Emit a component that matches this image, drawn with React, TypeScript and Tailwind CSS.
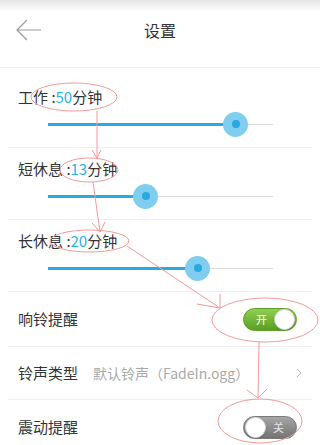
import React from "react";

const FONT = { fontFamily: '"Noto Sans CJK SC", Roboto, "Noto Sans", sans-serif' };

interface SliderProps {
  label: string;
  value: number;
  max: number;
}

function TimeSlider({ label, value, max }: SliderProps) {
  const pct = (value / max) * 100;
  return (
    <div>
      <div className="pl-[10px] text-[15px] leading-[20px] text-[#333]">
        {label} :<span className="text-[#29b3ec]">{value}</span>分钟
      </div>
      <div className="mt-[5px] h-[24px] flex items-center pl-[40px]">
        <div className="relative w-[225px] h-[24px]">
          <div className="absolute left-0 right-0 top-[11.5px] h-px bg-[#dcdcdc]" />
          <div className="absolute left-0 top-[10.5px] h-[3px] bg-[#2aa9e3]" style={{ width: `${pct}%` }} />
          <div
            className="absolute top-0 w-[25px] h-[25px] -ml-[12.5px] -mt-[0.5px] rounded-full bg-[#7fcdef] flex items-center justify-center"
            style={{ left: `${pct}%` }}
          >
            <div className="w-[8px] h-[8px] rounded-full bg-[#27a9e1]" />
          </div>
        </div>
      </div>
    </div>
  );
}

function Toggle({ on }: { on: boolean }) {
  if (on) {
    return (
      <div className="w-[54px] h-[23px] rounded-full bg-gradient-to-b from-[#8fd04e] to-[#5a9f22] border border-[#5f9e2c] flex items-center justify-between pl-[12px] pr-px">
        <span className="text-[11px] text-white leading-none">开</span>
        <div className="w-[21px] h-[21px] rounded-full bg-white border border-[#d8d8d8] shadow-sm" />
      </div>
    );
  }
  return (
    <div className="w-[54px] h-[23px] rounded-full bg-gradient-to-b from-[#a6a6a6] to-[#747474] border border-[#7a7a7a] flex items-center justify-between pl-px pr-[12px]">
      <div className="w-[21px] h-[21px] rounded-full bg-white border border-[#d8d8d8] shadow-sm" />
      <span className="text-[11px] text-[#e6e6e6] leading-none">关</span>
    </div>
  );
}

function Annotations() {
  const c = "#f49a9a";
  return (
    <svg className="absolute inset-0 pointer-events-none" width="320" height="445" viewBox="0 0 320 445" fill="none" stroke={c} strokeWidth="1">
      <ellipse cx="74" cy="97" rx="43" ry="14" />
      <ellipse cx="89" cy="170" rx="29" ry="12" />
      <ellipse cx="89.5" cy="241" rx="39.5" ry="11" />
      <ellipse cx="265" cy="320" rx="53" ry="22" />
      <ellipse cx="260" cy="421" rx="42" ry="22" />
      <path d="M97 111 L97 158 M92 150 L97 158 L101 150" />
      <path d="M93 182 L100 232 M92 223 L100 232 L105 222" />
      <path d="M127 246 L220 308 M197 304 L220 308 L220 294" />
      <path d="M259 342 L258 398 M247 390 L258 398 L267 389" />
    </svg>
  );
}

export default function App() {
  return (
    <div className="relative w-[320px] h-[445px] overflow-hidden bg-white" style={FONT}>
      <div className="h-[68px] bg-[linear-gradient(#e4e4e4,#ffffff_11px)] border-b border-[#f0f0f0]">
        <div className="h-[59px] flex items-center">
          <div className="w-[60px] pl-[16px] flex items-center">
            <svg width="26" height="22" viewBox="0 0 26 22" fill="none" stroke="#9a9a9a" strokeWidth="1.2">
              <path d="M25 11 L1 11 M11 1 L1 11 L11 21" />
            </svg>
          </div>
          <div className="flex-1 text-center text-[16px] text-[#333]">设置</div>
          <div className="w-[60px]" />
        </div>
      </div>

      <div className="mx-2">
        <div className="h-[80px] pt-[19px] border-b border-[#f0f0f0]">
          <TimeSlider label="工作" value={50} max={60} />
        </div>
        <div className="h-[72px] pt-[11px] border-b border-[#f0f0f0]">
          <TimeSlider label="短休息" value={13} max={30} />
        </div>
        <div className="h-[72px] pt-[11px] border-b border-[#f0f0f0]">
          <TimeSlider label="长休息" value={20} max={30} />
        </div>

        <div className="h-[55px] flex items-center justify-between pl-[10px] pr-[15px] border-b border-[#f0f0f0]">
          <span className="text-[15px] text-[#333]">响铃提醒</span>
          <Toggle on />
        </div>
        <div className="h-[53px] flex items-center pl-[10px] pr-[10px] border-b border-[#f0f0f0]">
          <span className="text-[15px] text-[#333]">铃声类型</span>
          <span className="ml-[15px] text-[14px] text-[#aaa]">默认铃声（FadeIn.ogg）</span>
          <svg className="ml-auto" width="6" height="10" viewBox="0 0 6 10" fill="none" stroke="#bbb" strokeWidth="1">
            <path d="M1 1 L5 5 L1 9" />
          </svg>
        </div>
        <div className="h-[55px] flex items-center justify-between pl-[10px] pr-[15px]">
          <span className="text-[15px] text-[#333]">震动提醒</span>
          <Toggle on={false} />
        </div>
      </div>

      <Annotations />
    </div>
  );
}
